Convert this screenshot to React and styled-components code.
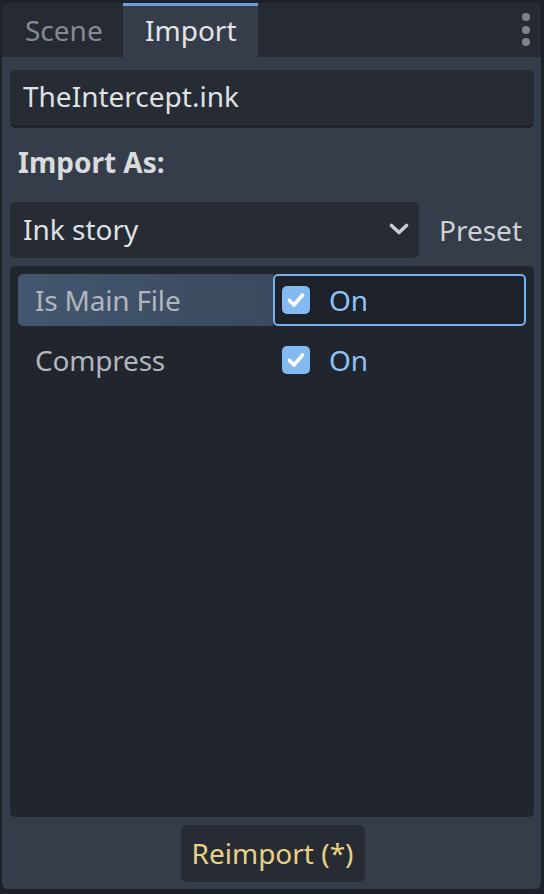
import React from "react";
import styled, { createGlobalStyle } from "styled-components";

const Global = createGlobalStyle`
  html, body {
    margin: 0;
    padding: 0;
    background: #1d2128;
    width: 544px;
    height: 894px;
    overflow: hidden;
    font-family: "Noto Sans", "Open Sans", sans-serif;
    font-size: 28px;
  }
  * { box-sizing: border-box; }
`;

const Panel = styled.div`
  margin: 3px 3px 0 2px;
  height: 886px;
  background: #363d4a;
  border-radius: 6px;
  overflow: hidden;
  display: flex;
  flex-direction: column;
`;

const TabBar = styled.div`
  height: 54px;
  flex: none;
  background: #252a33;
  display: flex;
  align-items: stretch;
`;

const Tab = styled.div`
  width: ${(p) => p.$w}px;
  padding-left: ${(p) => p.$pad}px;
  display: flex;
  align-items: center;
  padding-bottom: ${(p) => (p.$active ? 3 : 1)}px;
  color: ${(p) => (p.$active ? "#e2e4e7" : "#868a91")};
  background: ${(p) => (p.$active ? "#363d4a" : "transparent")};
  border-top: ${(p) => (p.$active ? "3px solid #6f9fd8" : "none")};
  line-height: 1;
`;

const Menu = styled.div`
  margin-left: auto;
  width: 30px;
  padding-top: 10px;
  display: flex;
  flex-direction: column;
  align-items: center;
  gap: 4.5px;
`;

const Dot = styled.span`
  width: 8px;
  height: 8px;
  border-radius: 50%;
  background: #7f848c;
`;

const Body = styled.div`
  flex: 1;
  display: flex;
  flex-direction: column;
  padding: 13px 7px 7px 8px;
  min-height: 0;
`;

const Field = styled.div`
  height: 58px;
  flex: none;
  background: #262b34;
  border-bottom: 3px solid #1f232a;
  border-radius: 5px;
  padding: 0 0 3px 13px;
  display: flex;
  align-items: center;
  color: #dfe1e4;
`;

const SectionLabel = styled.div`
  margin: 15px 0 0 8px;
  height: 38px;
  line-height: 38px;
  font-weight: bold;
  color: #d9dbde;
`;

const ImportRow = styled.div`
  margin-top: 21px;
  height: 56px;
  flex: none;
  display: flex;
`;

const Dropdown = styled.div`
  width: 409px;
  background: #262b34;
  border-radius: 5px;
  padding: 0 10px 2px 13px;
  display: flex;
  align-items: center;
  justify-content: space-between;
  color: #dfe1e4;
`;

const PresetButton = styled.div`
  flex: 1;
  display: flex;
  align-items: center;
  justify-content: flex-end;
  padding: 0 12px 1px 0;
  color: #cfd1d4;
`;

const Inspector = styled.div`
  margin-top: 8px;
  flex: 1;
  background: #21262e;
  border-radius: 5px;
  padding: 8px;
  display: flex;
  flex-direction: column;
  gap: 8px;
`;

const PropRow = styled.div`
  height: 52px;
  flex: none;
  display: grid;
  grid-template-columns: 255px 1fr;
`;

const PropLabel = styled.div`
  display: flex;
  align-items: center;
  padding: 0 0 1px 17px;
  color: #b2b6bc;
  border-radius: 5px 0 0 5px;
  letter-spacing: -0.2px;
  background: ${(p) =>
    p.$selected ? "linear-gradient(90deg, #42566f 0%, #3b4a5e 100%)" : "transparent"};
`;

const PropEditor = styled.div`
  display: flex;
  align-items: center;
  gap: 19px;
  padding-left: 7px;
  border: 2px solid ${(p) => (p.$focused ? "#78b2ee" : "transparent")};
  border-radius: 5px;
  background: ${(p) => (p.$focused ? "#1d2129" : "transparent")};
  color: #8fc3f6;
`;

const CheckBox = styled.span`
  width: 28px;
  height: 28px;
  border-radius: 5px;
  background: #84baf2;
  display: flex;
  align-items: center;
  justify-content: center;
`;

const Footer = styled.div`
  margin-top: 8px;
  display: flex;
  justify-content: center;
  flex: none;
`;

const ReimportButton = styled.div`
  width: 184px;
  height: 57px;
  margin-left: 1px;
  background: #262b34;
  border-radius: 6px;
  display: flex;
  align-items: center;
  justify-content: center;
  padding-bottom: 2px;
  color: #e8d283;
`;

const Check = () => (
  <svg width="20" height="20" viewBox="0 0 20 20">
    <polyline
      points="3.5,10.5 8,15 16.5,5"
      fill="none"
      stroke="#ffffff"
      strokeWidth="3.6"
      strokeLinecap="round"
      strokeLinejoin="round"
    />
  </svg>
);

const Chevron = () => (
  <svg width="20" height="12" viewBox="0 0 20 12">
    <polyline
      points="2.5,2.5 10,9.5 17.5,2.5"
      fill="none"
      stroke="#c9cbce"
      strokeWidth="3.6"
      strokeLinecap="round"
      strokeLinejoin="round"
    />
  </svg>
);

const props = [
  { name: "Is Main File", selected: true },
  { name: "Compress", selected: false },
];

export default function App() {
  return (
    <>
      <Global />
      <Panel>
        <TabBar>
          <Tab $w={121} $pad={23}>Scene</Tab>
          <Tab $w={135} $pad={22} $active>Import</Tab>
          <Menu>
            <Dot />
            <Dot />
            <Dot />
          </Menu>
        </TabBar>
        <Body>
          <Field>TheIntercept.ink</Field>
          <SectionLabel>Import As:</SectionLabel>
          <ImportRow>
            <Dropdown>
              <span>Ink story</span>
              <Chevron />
            </Dropdown>
            <PresetButton>Preset</PresetButton>
          </ImportRow>
          <Inspector>
            {props.map((p) => (
              <PropRow key={p.name}>
                <PropLabel $selected={p.selected}>{p.name}</PropLabel>
                <PropEditor $focused={p.selected}>
                  <CheckBox>
                    <Check />
                  </CheckBox>
                  <span>On</span>
                </PropEditor>
              </PropRow>
            ))}
          </Inspector>
          <Footer>
            <ReimportButton>Reimport (*)</ReimportButton>
          </Footer>
        </Body>
      </Panel>
    </>
  );
}
